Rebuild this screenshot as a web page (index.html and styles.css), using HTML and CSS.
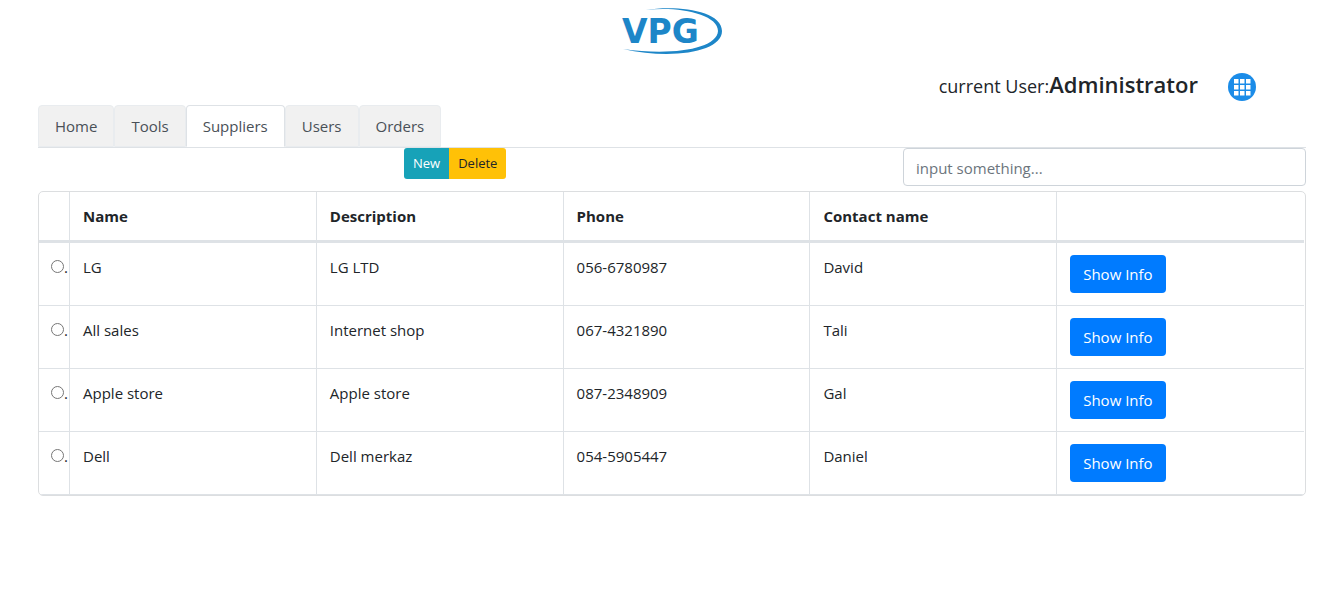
FILE: index.html
```html
<!DOCTYPE html>
<html lang="en">
<head>
<meta charset="utf-8">
<title>Suppliers</title>
<link rel="stylesheet" href="styles.css">
</head>
<body>
<header class="header">
  <svg class="logo" viewBox="0 0 104 50" role="img" aria-label="VPG">
    <path d="M26 4 C55 -1 102 4 102 25 C102 46 52 54 3 43 C52 50 97 43 98 25 C98 8 58 0 26 4 Z"/>
    <text x="2" y="37">VPG</text>
  </svg>
  <div class="user">
    <p class="user-text">current User:<strong class="user-name">Administrator</strong></p>
    <button class="apps" type="button" aria-label="Menu">
      <svg class="apps-icon" viewBox="0 0 28 28">
        <circle cx="14" cy="14" r="14" fill="#1b8ce8"/>
        <path fill="#fff" d="M6 6h4.500v4.500H6z M12 6h4.500v4.500H12z M18 6h4.500v4.500H18z M6 12h4.500v4.500H6z M12 12h4.500v4.500H12z M18 12h4.500v4.500H18z M6 18h4.500v4.500H6z M12 18h4.500v4.500H12z M18 18h4.500v4.500H18z"/>
      </svg>
    </button>
  </div>
</header>
<main class="page">
  <nav class="tabs">
    <a class="tab" href="#home">Home</a>
    <a class="tab" href="#tools">Tools</a>
    <a class="tab tab-active" href="#suppliers" aria-current="page">Suppliers</a>
    <a class="tab" href="#users">Users</a>
    <a class="tab" href="#orders">Orders</a>
  </nav>
  <div class="toolbar">
    <div class="actions">
      <button class="action action-new" type="button">New</button>
      <button class="action action-delete" type="button">Delete</button>
    </div>
    <input class="search" type="text" aria-label="Search suppliers" placeholder="input something...">
  </div>
  <div class="table-frame">
    <table class="table">
      <thead>
        <tr><th class="pick"></th><th>Name</th><th>Description</th><th>Phone</th><th>Contact name</th><th></th></tr>
      </thead>
      <tbody>
        <tr><td class="pick"><label class="choice"><input class="radio" type="radio" name="supplier" aria-label="LG">.</label></td><td>LG</td><td>LG LTD</td><td>056-6780987</td><td>David</td><td><button class="info" type="button">Show Info</button></td></tr>
        <tr><td class="pick"><label class="choice"><input class="radio" type="radio" name="supplier" aria-label="All sales">.</label></td><td>All sales</td><td>Internet shop</td><td>067-4321890</td><td>Tali</td><td><button class="info" type="button">Show Info</button></td></tr>
        <tr><td class="pick"><label class="choice"><input class="radio" type="radio" name="supplier" aria-label="Apple store">.</label></td><td>Apple store</td><td>Apple store</td><td>087-2348909</td><td>Gal</td><td><button class="info" type="button">Show Info</button></td></tr>
        <tr><td class="pick"><label class="choice"><input class="radio" type="radio" name="supplier" aria-label="Dell">.</label></td><td>Dell</td><td>Dell merkaz</td><td>054-5905447</td><td>Daniel</td><td><button class="info" type="button">Show Info</button></td></tr>
      </tbody>
    </table>
  </div>
</main>
</body>
</html>
```
FILE: styles.css
```css
* { box-sizing: border-box; }
body {
  margin: 0;
  background: #fff;
  color: #212529;
  font: 15px/24px "Segoe UI", "Open Sans", "Noto Sans", sans-serif;
}
button, input { font: inherit; margin: 0; }
.header {
  display: flex;
  flex-direction: column;
  align-items: center;
  padding-top: 6px;
}
.logo { width: 104px; height: 50px; fill: #1d86c8; }
.logo text { font: 700 33px "DejaVu Sans", sans-serif; }
.user {
  align-self: flex-end;
  display: flex;
  align-items: center;
  gap: 30px;
  margin: 12px 87px 0 0;
  height: 37px;
}
.user-text { margin: 0; padding-bottom: 4px; font-size: 18px; line-height: 32px; }
.user-name { font-size: 22px; font-weight: 600; }
.apps {
  width: 28px;
  height: 28px;
  padding: 0;
  border: 0;
  border-radius: 50%;
  background: none;
}
.apps-icon { display: block; width: 28px; height: 28px; }
.page { padding: 0 37px 24px 38px; }
.tabs { display: flex; height: 43px; border-bottom: 1px solid #dee2e6; }
.tab {
  padding: 8px 16px;
  border: 1px solid #e9ecef;
  border-radius: 4px 4px 0 0;
  background: #f1f1f1;
  color: #495057;
  text-decoration: none;
}
.tab-active {
  border-color: #dee2e6 #dee2e6 #fff;
  background: #fff;
}
.toolbar {
  display: flex;
  justify-content: space-between;
  align-items: flex-start;
  padding-left: 366px;
  margin-bottom: 5px;
}
.actions { display: flex; }
.action {
  padding: 4px 9px;
  border: 0;
  font-size: 13px;
  line-height: 23px;
}
.action-new { border-radius: 3px 0 0 3px; background: #17a2b8; color: #fff; }
.action-delete { border-radius: 0 3px 3px 0; background: #ffc107; color: #212529; }
.search {
  width: 403px;
  height: 38px;
  padding: 7px 12px 5px;
  border: 1px solid #ced4da;
  border-radius: 4px;
  color: #495057;
}
.search::placeholder { color: #6c757d; opacity: 1; }
.table-frame {
  overflow: hidden;
  padding-right: 1px;
  border: 1px solid #dcdee0;
  border-radius: 5px;
}
.table {
  width: 100%;
  table-layout: fixed;
  border-collapse: separate;
  border-spacing: 0;
}
th, td {
  padding: 12px 12px 12px 13px;
  border-right: 1px solid #dee2e6;
  border-bottom: 1px solid #dee2e6;
  text-align: left;
  vertical-align: top;
}
th { border-bottom-width: 3px; font-weight: 700; }
th:last-child, td:last-child { border-right: 0; }
.pick { width: 31px; padding-left: 12px; padding-right: 0; }
.choice { display: flex; }
.radio { width: 13px; height: 13px; margin-top: 5px; }
.info {
  display: block;
  padding: 7px 13px;
  border: 0;
  border-radius: 4px;
  background: #007bff;
  color: #fff;
}
```
